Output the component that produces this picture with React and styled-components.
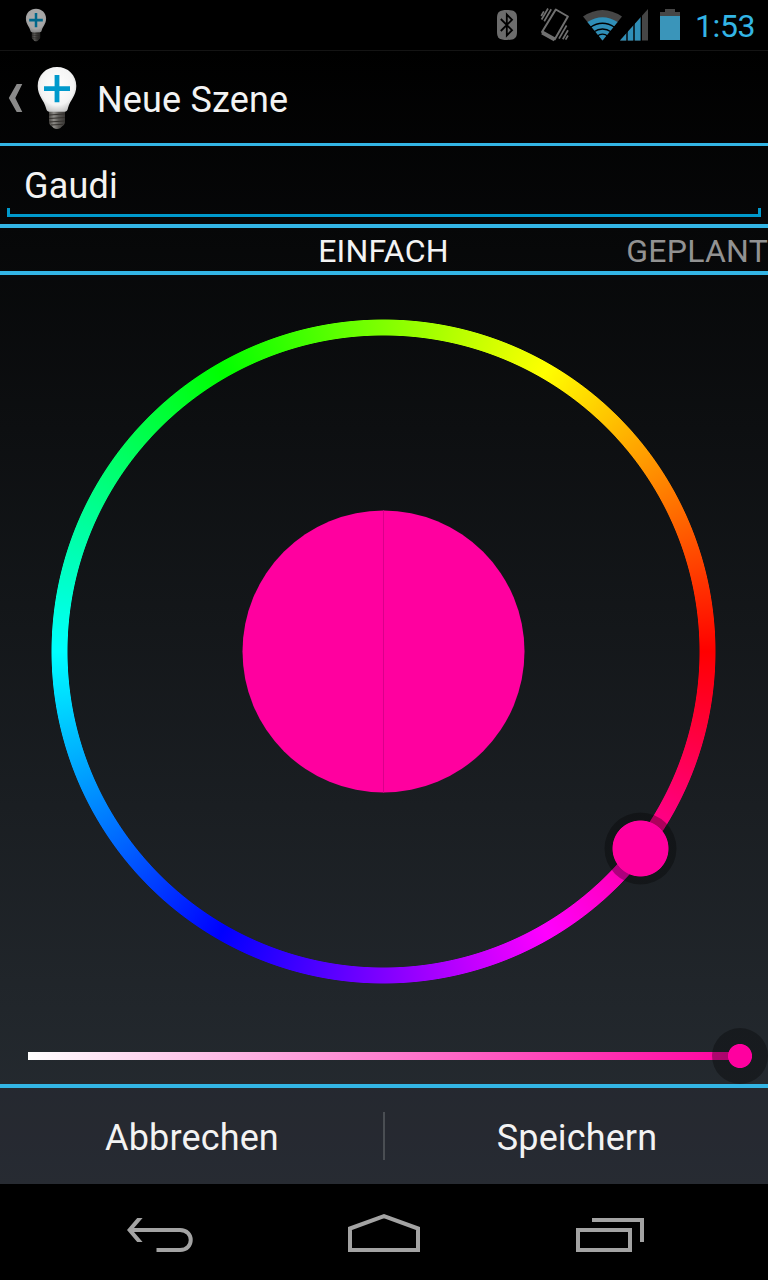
import React from "react";
import styled, { createGlobalStyle } from "styled-components";

const HOLO = "#33b5e5";
const PICKED = "#ff009f";

const GlobalStyle = createGlobalStyle`
  * { box-sizing: border-box; }
  body { margin: 0; background: #000; }
`;

const Screen = styled.div`
  display: flex;
  flex-direction: column;
  width: 768px;
  height: 1280px;
  overflow: hidden;
  color: #f3f3f3;
  font-family: Roboto, "Liberation Sans", sans-serif;
  background: linear-gradient(#000 0, #000 50px, #272d33 1184px, #000 1184px);
`;

const StatusBar = styled.header`
  display: flex;
  align-items: flex-start;
  height: 51px;
  padding-left: 25px;
  background: #000;
  border-bottom: 1px solid #141414;
`;

const StatusIcons = styled.div`
  display: flex;
  margin-left: auto;
`;

const Clock = styled.time`
  width: 74px;
  height: 50px;
  padding: 1px 0 0 1px;
  font-size: 32px;
  line-height: 50px;
  letter-spacing: ${(p) => p.$tracking}px;
  color: ${HOLO};
`;

const ActionBar = styled.div`
  display: flex;
  align-items: center;
  height: 95px;
  padding-top: 2px;
  border-bottom: 3px solid ${HOLO};
`;

const BackChevron = styled.svg`
  flex: none;
  width: 15px;
  height: 30px;
  margin: 0 13px 0 8px;
`;

const Title = styled.h1`
  margin: 3px 0 0 19px;
  font-size: 36px;
  font-weight: 400;
  line-height: 44px;
  letter-spacing: ${(p) => p.$tracking}px;
`;

const NameRow = styled.div`
  display: flex;
  height: 82px;
  padding: 0 7px 7px;
  border-bottom: 4px solid ${HOLO};
`;

const NameField = styled.div`
  display: flex;
  flex: 1;
  flex-direction: column;
  justify-content: flex-end;
`;

const NameText = styled.span`
  padding-left: 17px;
  font-size: 36px;
  line-height: 44px;
  letter-spacing: ${(p) => p.$tracking}px;
`;

const Underline = styled.div`
  height: 9px;
  border: solid #0099cc;
  border-width: 0 3px 3px;
`;

const Tabs = styled.nav`
  display: grid;
  grid-template-columns: 1fr auto 1fr;
  align-items: center;
  height: 47px;
  padding-top: 2px;
  border-bottom: 4px solid ${HOLO};
`;

const Tab = styled.span`
  grid-column: ${(p) => p.$column};
  justify-self: end;
  padding-right: ${(p) => (p.$active ? 1 : 0)}px;
  font-size: 32px;
  line-height: 42px;
  letter-spacing: ${(p) => p.$tracking}px;
  color: ${(p) => (p.$active ? "#f3f3f3" : "#929292")};
`;

const Picker = styled.main`
  display: flex;
  flex-direction: column;
  height: 813px;
  padding: 44px 0 0;
  border-bottom: 4px solid ${HOLO};
`;

const Wheel = styled.div`
  position: relative;
  display: grid;
  place-items: center;
  width: 665px;
  height: 665px;
  margin-left: 51px;
`;

const HueRing = styled.div`
  grid-area: 1 / 1;
  width: 665px;
  height: 665px;
  background: conic-gradient(from 90deg, #f00, #f0f, #00f, #0ff, #0f0, #ff0, #f00);
  mask: radial-gradient(circle, transparent 315.6px, #000 316.4px, #000 331.6px, transparent 332.4px);
`;

const Swatch = styled.div`
  display: flex;
  justify-content: center;
  grid-area: 1 / 1;
  width: 283px;
  height: 283px;
  background: ${PICKED};
  clip-path: circle(141px);
`;

const SwatchSeam = styled.div`
  width: 1px;
  background: #d9008a;
`;

const Knob = styled.div`
  position: absolute;
  left: ${(p) => p.$x - p.$size / 2}px;
  top: ${(p) => p.$y - p.$size / 2}px;
  width: ${(p) => p.$size}px;
  height: ${(p) => p.$size}px;
  background: radial-gradient(
    circle,
    ${PICKED} ${(p) => p.$dot - 0.4}px,
    rgba(0, 0, 0, 0.32) ${(p) => p.$dot + 0.4}px
  );
  clip-path: circle(${(p) => p.$halo}px);
`;

const Saturation = styled.div`
  position: relative;
  width: 712px;
  height: 8px;
  margin: 68px 0 0 28px;
  background: linear-gradient(90deg, #fff, ${PICKED});
`;

const Buttons = styled.div`
  display: flex;
  align-items: center;
  height: 96px;
  background: rgba(39, 41, 51, 0.4);
`;

const Button = styled.button`
  flex: 1;
  height: 96px;
  padding: 3px 0 0 1px;
  border: 0;
  background: none;
  color: inherit;
  font: 400 36px/44px Roboto, "Liberation Sans", sans-serif;
  letter-spacing: ${(p) => p.$tracking}px;
`;

const Divider = styled.div`
  width: 2px;
  height: 48px;
  background: #4a4e53;
`;

const NavBar = styled.footer`
  display: flex;
  justify-content: space-between;
  height: 96px;
  padding: 24px 120px 0;
  background: #000;
`;

const NavIcon = styled.svg`
  width: 80px;
  height: 48px;
  fill: none;
  stroke: #a3a3a3;
  stroke-width: 4;
`;

function Bulb({ width, height, id, dim }) {
  return (
    <svg width={width} height={height} viewBox="0 0 42 64" opacity={dim ? 0.68 : 1}>
      <defs>
        <radialGradient id={id} cx="0.5" cy="0.42" r="0.6">
          <stop offset="0" stopColor="#fff" />
          <stop offset="0.72" stopColor="#f4f4f4" />
          <stop offset="1" stopColor="#c4c4c4" />
        </radialGradient>
        <linearGradient id={id + "-cap"}>
          <stop offset="0" stopColor="#4a4845" />
          <stop offset="0.3" stopColor="#8f8d89" />
          <stop offset="0.6" stopColor="#5a5855" />
          <stop offset="1" stopColor="#3a3836" />
        </linearGradient>
      </defs>
      <path d="M13 45H29V56C29 59 26 60 24.5 62Q21 64 17.5 62C16 60 13 59 13 56Z" fill={`url(#${id}-cap)`} />
      <path d="M13 49L29 48M13 52.5L29 51.5M13 56L29 55M15 59L27 58.3" stroke="#33302d" strokeWidth="1" />
      <path
        d="M21 1C10 1 1.7 9 1.7 20C1.7 30 8 34 10 42Q10.5 45.7 13.5 45.7H28.5Q31.5 45.7 32 42C34 34 40.3 30 40.3 20C40.3 9 32 1 21 1Z"
        fill={`url(#${id})`}
      />
      <path d="M21 9V36.3M8 22.7H34" stroke="#0099cc" strokeWidth="4.8" />
    </svg>
  );
}

function StatusGlyphs() {
  return (
    <svg width="200" height="50" viewBox="494 0 200 50" fill="none">
      <path
        d="M507 10C514.5 10 517 12 517 18V32C517 38 514.5 40 507 40C499.5 40 497 38 497 32V18C497 12 499.5 10 507 10Z"
        fill="#6c6c6c"
      />
      <path d="M500.8 19L512 30.2L506.8 35.5V14.5L512 19.8L500.8 31" stroke="#000" strokeWidth="1.8" />
      <g stroke="#707070">
        <path d="M555.8 9.5L567.9 16.5L554.8 39.2L542 32Z" strokeWidth="2" strokeLinejoin="round" />
        <path d="M542.2 32.4L554.8 39.4" strokeWidth="4" />
        <path d="M543.8 11.4L541.2 16M548 8.5L541.6 19.5M551.2 9.3L544.2 21.2M566.6 25.5L559 38.6M568 30.3L562.8 39.3M568 35.5L565.6 39.6" strokeWidth="1.7" />
      </g>
      <path d="M602.5 40.5L583 16.5Q602.5 3.5 622 16.5Z" fill="#464646" />
      <path d="M602.5 40.5L587.4 22Q602.5 12.5 617.6 22Z" fill="#2f8fb8" />
      <path d="M590 27.5Q602.5 19 615 27.5M593.5 32Q602.5 26 611.5 32M597 36.3Q602.5 32 608 36.3" stroke="#000" strokeWidth="1.3" />
      <path d="M620 40.5L648 9V40.5Z" fill="#464646" />
      <path d="M620 40.5L641 17V40.5Z" fill="#2f8fb8" />
      <path d="M627 30V41M634 23V41M641.3 14V41" stroke="#000" strokeWidth="1.4" />
      <path d="M660 40V12H665V9H675V12H680V40Z" fill="#464646" />
      <path d="M660 16H680V40H660Z" fill="#3a95ba" />
    </svg>
  );
}

export default function App() {
  return (
    <>
      <GlobalStyle />
      <Screen>
        <StatusBar>
          <svg width="22" height="50" viewBox="0 0 22 50">
            <g transform="translate(0 8)">
              <Bulb width={22} height={34} id="bulb-small" dim />
            </g>
          </svg>
          <StatusIcons>
            <StatusGlyphs />
            <Clock $tracking={-0.4}>1:53</Clock>
          </StatusIcons>
        </StatusBar>

        <ActionBar>
          <BackChevron viewBox="0 0 15 30">
            <path d="M8.7 1H14.3L7.3 15L14.3 29H8.7L0.8 15Z" fill="#8a8a8a" />
          </BackChevron>
          <Bulb width={42} height={64} id="bulb-large" />
          <Title $tracking={0.15}>Neue Szene</Title>
        </ActionBar>

        <NameRow>
          <NameField>
            <NameText $tracking={0.2}>Gaudi</NameText>
            <Underline />
          </NameField>
        </NameRow>

        <Tabs>
          <Tab $column={2} $tracking={0.22} $active>EINFACH</Tab>
          <Tab $column={3} $tracking={0.25}>GEPLANT</Tab>
        </Tabs>

        <Picker>
          <Wheel>
            <HueRing />
            <Swatch>
              <SwatchSeam />
            </Swatch>
            <Knob $x={589.5} $y={529.5} $size={73} $halo={36} $dot={28} />
          </Wheel>
          <Saturation>
            <Knob $x={712} $y={4} $size={56} $halo={28} $dot={12} />
          </Saturation>
        </Picker>

        <Buttons>
          <Button $tracking={0.14}>Abbrechen</Button>
          <Divider />
          <Button $tracking={0.12}>Speichern</Button>
        </Buttons>

        <NavBar>
          <NavIcon viewBox="120 1208 80 48">
            <path
              d="M127 1230L137.2 1218H142.6L134 1228V1232L142.6 1242H137.2Z"
              fill="#a3a3a3"
              stroke="none"
            />
            <path d="M131 1230H180C194.300 1230 194.300 1250 180 1250H156.5" />
          </NavIcon>
          <NavIcon viewBox="344 1208 80 48">
            <path d="M350 1250V1228.5L384 1216.2L418 1228.5V1250Z" />
          </NavIcon>
          <NavIcon viewBox="568 1208 80 48">
            <path d="M578 1230H630V1250H578ZM592 1220H642V1242" />
          </NavIcon>
        </NavBar>
      </Screen>
    </>
  );
}
